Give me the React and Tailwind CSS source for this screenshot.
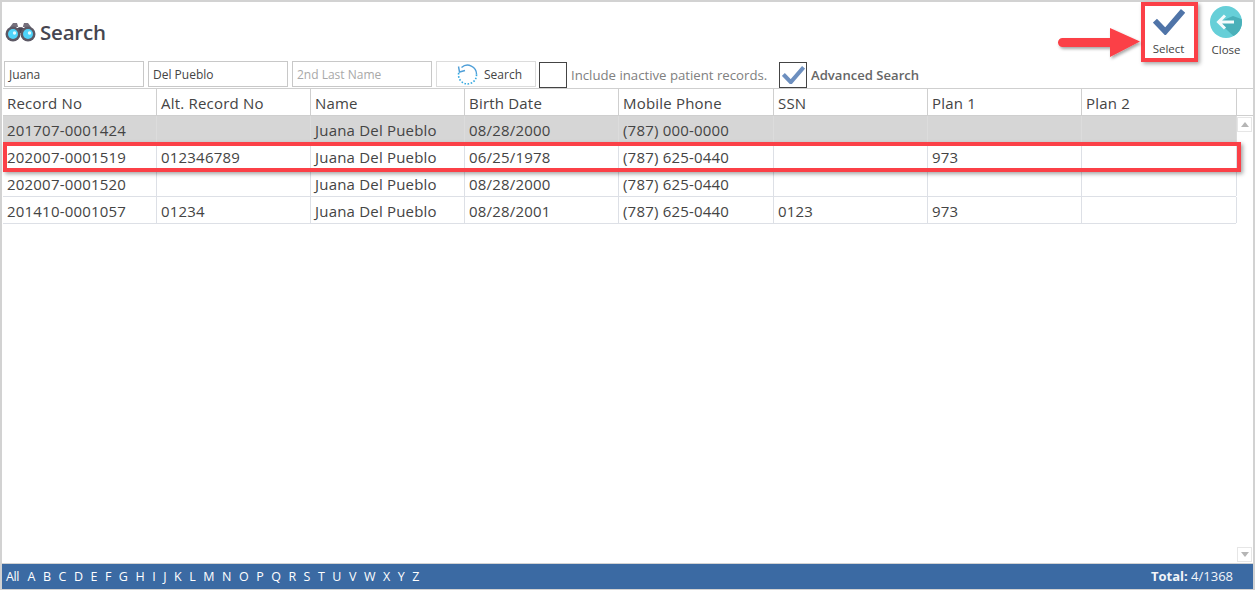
const cols = ["Record No", "Alt. Record No", "Name", "Birth Date", "Mobile Phone", "SSN", "Plan 1", "Plan 2"];
const rows = [
  ["201707-0001424", "", "Juana Del Pueblo", "08/28/2000", "(787) 000-0000", "", "", ""],
  ["202007-0001519", "012346789", "Juana Del Pueblo", "06/25/1978", "(787) 625-0440", "", "973", ""],
  ["202007-0001520", "", "Juana Del Pueblo", "08/28/2000", "(787) 625-0440", "", "", ""],
  ["201410-0001057", "01234", "Juana Del Pueblo", "08/28/2001", "(787) 625-0440", "0123", "973", ""],
];
const widths = ["w-[154px]", "w-[154px]", "w-[154px]", "w-[154px]", "w-[155px]", "w-[154px]", "w-[154px]", "w-[155px]"];
const letters = "ABCDEFGHIJKLMNOPQRSTUVWXYZ".split("");
const font = { fontFamily: '"Open Sans", "Noto Sans", sans-serif' };

function Binoculars() {
  return (
    <svg width="31" height="20" viewBox="0 0 31 20" className="shrink-0">
      <path d="M5 5 L8 1 H12 L13.5 6 H17.5 L19 1 H23 L26 5 Z" fill="#75707c" />
      <rect x="12" y="6" width="7" height="5" fill="#4b4654" />
      <circle cx="8" cy="12" r="7.5" fill="#5d5965" />
      <circle cx="23" cy="12" r="7.5" fill="#5d5965" />
      <circle cx="8" cy="12" r="5" fill="#4fd4fa" />
      <circle cx="23" cy="12" r="5" fill="#4fd4fa" />
      <circle cx="9.5" cy="11" r="1.7" fill="#e4fbff" />
      <circle cx="24.5" cy="11" r="1.7" fill="#e4fbff" />
    </svg>
  );
}

function Check({ size = 32, sw = 6, color = "#4f74a8" }) {
  return (
    <svg width={size} height={size * 0.82} viewBox="0 0 34 28">
      <path d="M2 12.5 L13 24 L32 2" fill="none" stroke={color} strokeWidth={sw} />
    </svg>
  );
}

function CloseIcon() {
  return (
    <svg width="32" height="32" viewBox="0 0 32 32">
      <defs>
        <clipPath id="closeclip"><circle cx="16" cy="16" r="16" /></clipPath>
      </defs>
      <circle cx="16" cy="16" r="16" fill="#66cfd8" />
      <path d="M9 16 L17 24 L32 38 L40 16 L23 10 Z" fill="#4ab0b9" clipPath="url(#closeclip)" />
      <path d="M24 16 H9 M15 9.5 L8.5 16 L15 22.5" fill="none" stroke="#f4fbfc" strokeWidth="3" />
    </svg>
  );
}

function Spinner() {
  return (
    <svg width="21" height="21" viewBox="0 0 21 21">
      <path d="M4.5 3.5 A9 9 0 0 1 19.5 10.5" fill="none" stroke="#4f9fd8" strokeWidth="1.4" />
      <path d="M19.5 10.5 A9 9 0 1 1 2 8" fill="none" stroke="#35a9e0" strokeWidth="1.6" strokeDasharray="1.6 1.6" />
      <path d="M1.5 2.5 L2.5 8 L8 6.5" fill="none" stroke="#4f9fd8" strokeWidth="1.4" />
    </svg>
  );
}

function Input({ value, placeholder }) {
  return (
    <div className={`w-[140px] h-[26px] border border-[#c8c8c8] bg-white flex items-center pl-[4px] pt-[1px] text-[12px] ${placeholder ? "text-[#a8a8a8]" : "text-[#444444]"}`}>
      {value || placeholder}
    </div>
  );
}

export default function App() {
  return (
    <div className="relative w-[1255px] h-[590px] bg-[#d2d2d2] pt-[2px] pl-[2px] pr-[2px] pb-[1px] overflow-hidden" style={font}>
      <div className="h-[587px] bg-white flex flex-col">
        {/* Title row */}
        <div className="h-[59px] flex items-start justify-between shrink-0">
          <div className="flex items-center gap-[4px] pl-[3px] pt-[16px]">
            <Binoculars />
            <span className="text-[20.5px] leading-[28px] font-semibold text-[#464650] tracking-[-0.2px]">Search</span>
          </div>
          <div className="flex items-start pr-[6px]">
            <div className="w-[57px] flex flex-col items-center pt-[7px]">
              <Check />
              <span className="mt-[7px] text-[11.5px] leading-[14px] text-[#444444]">Select</span>
            </div>
            <div className="w-[42px] ml-[8px] flex flex-col items-center pt-[4px]">
              <CloseIcon />
              <span className="mt-[5px] text-[11.5px] leading-[14px] text-[#444444]">Close</span>
            </div>
          </div>
        </div>
        {/* Toolbar */}
        <div className="h-[27px] flex items-start gap-[4px] pl-[2px] shrink-0">
          <Input value="Juana" />
          <Input value="Del Pueblo" />
          <Input placeholder="2nd Last Name" />
          <div className="w-[100px] h-[26px] border border-[#dcdcdc] flex items-center pl-[20px] gap-[6px] text-[12px] text-[#444444]">
            <Spinner />
            <span className="pt-[1px]">Search</span>
          </div>
          <div className="w-[28px] h-[26px] mt-[1px] -ml-[1px] border border-[#444444] shrink-0"></div>
          <span className="text-[13.2px] leading-[28px] text-[#808080] w-[204px] whitespace-nowrap">Include inactive patient records.</span>
          <div className="w-[28px] h-[26px] mt-[1px] border border-[#444444] flex items-center justify-center shrink-0">
            <Check size={23} sw={6} color="#6d8fbf" />
          </div>
          <span className="text-[13.1px] leading-[28px] font-semibold text-[#666666] whitespace-nowrap">Advanced Search</span>
        </div>
        {/* Grid */}
        <div className="flex-1 flex flex-col min-h-0 pl-[1px]">
          <div className="flex h-[28px] border-t border-b border-[#cfcfcf] shrink-0">
            {cols.map((c, i) => (
              <div key={c} className={`${widths[i]} shrink-0 border-r border-[#cfcfcf] pl-[4px] pt-[2px] text-[15px] leading-[25px] text-[#444444] tracking-[0.2px] whitespace-nowrap`}>{c}</div>
            ))}
            <div className="flex-1"></div>
          </div>
          <div className="flex flex-1 min-h-0">
            <div className="w-[1233px] shrink-0">
              {rows.map((r, ri) => (
                <div key={ri} className={`flex h-[27px] border-b ${ri === 0 ? "bg-[#d6d6d6] border-[#d6d6d6]" : "bg-white border-[#dde0e6]"}`}>
                  {r.map((v, i) => (
                    <div key={i} className={`${widths[i]} shrink-0 border-r ${ri === 0 ? "border-[#dcdcdc]" : "border-[#dde0e6]"} pl-[4px] pt-[1px] text-[15px] leading-[26px] text-[#444444] tracking-[0.2px] whitespace-nowrap`}>{v}</div>
                  ))}
                </div>
              ))}
            </div>
            <div className="flex-1 flex flex-col justify-between items-center pb-[1px] pt-[1px]">
              <div className="w-[15px] h-[15px] border border-[#e6e6e6] flex items-center justify-center">
                <div className="w-0 h-0 border-l-[4px] border-r-[4px] border-b-[5px] border-l-transparent border-r-transparent border-b-[#b5b5b5]"></div>
              </div>
              <div className="w-[15px] h-[15px] border border-[#e6e6e6] flex items-center justify-center">
                <div className="w-0 h-0 border-l-[4px] border-r-[4px] border-t-[5px] border-l-transparent border-r-transparent border-t-[#b5b5b5]"></div>
              </div>
            </div>
          </div>
        </div>
        {/* Footer */}
        <div className="h-[24px] bg-[#3b6aa3] flex items-center justify-between pl-[4px] pr-[20px] pt-[1px] text-white shrink-0 border-t border-[#d2d2d2] box-content">
          <div className="flex items-center gap-[7.5px] text-[12.5px]">
            <span className="mr-[1px] tracking-[-0.4px]">All</span>
            {letters.map((l) => <span key={l}>{l}</span>)}
          </div>
          <div className="text-[13px] text-[#f2f5f9]"><span className="font-bold">Total:</span> 4/1368</div>
        </div>
      </div>

      {/* Annotations */}
      <div className="absolute left-[1141px] top-[2px] w-[57px] h-[60px] border-[4px] border-[#fb4047] shadow-[2px_2px_4px_rgba(0,0,0,0.35)]"></div>
      <div className="absolute left-[3px] top-[142px] w-[1238px] h-[30px] border-[4px] border-[#fb4047] shadow-[2px_2px_4px_rgba(0,0,0,0.35)]"></div>
      <svg className="absolute left-[1056px] top-[26px]" width="88" height="36" viewBox="0 0 88 36">
        <defs>
          <filter id="arrowshadow" x="-10%" y="-20%" width="125%" height="150%">
            <feDropShadow dx="1.5" dy="2" stdDeviation="1.5" floodColor="#000" floodOpacity="0.35" />
          </filter>
        </defs>
        <path d="M6.5 12 H54 V2 L84 15.5 L54 31 V21 H6.5 A4.5 4.5 0 0 1 6.5 12 Z" fill="#fb4047" filter="url(#arrowshadow)" />
      </svg>
    </div>
  );
}
